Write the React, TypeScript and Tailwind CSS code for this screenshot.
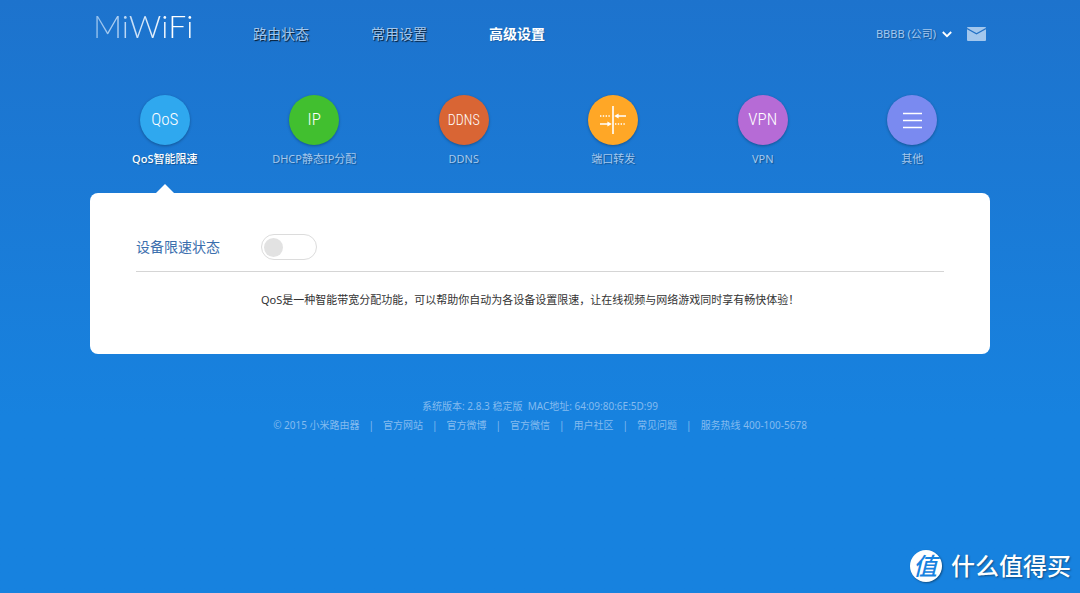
import { useState } from 'react';
import type { ReactNode } from 'react';
import clsx from 'clsx';

const navigation = [
  { name: '路由状态', current: false },
  { name: '常用设置', current: false },
  { name: '高级设置', current: true },
];

const footerLinks = ['官方网站', '官方微博', '官方微信', '用户社区', '常见问题'];

const PortForwardIcon = () => (
  <svg viewBox="0 0 28 30" className="h-[30px] w-7" fill="none" stroke="#fff" aria-hidden="true">
    <path d="M14 1v28" strokeWidth="1.6" />
    <path d="M1 11h11" strokeWidth="1.4" strokeDasharray="1.4 1.4" />
    <path d="M16 19h11" strokeWidth="1.4" strokeDasharray="1.4 1.4" />
    <path d="M19 11h8M1 19h9" strokeWidth="1.5" />
    <path d="M15.2 11l4.4-2.5v5zM12.8 19l-4.4-2.5v5z" fill="#fff" stroke="none" />
  </svg>
);

const ListIcon = () => (
  <svg viewBox="0 0 19 17" className="h-[17px] w-[19px]" fill="none" stroke="#fff" aria-hidden="true">
    <path d="M0 1.5h19M0 8.5h19M0 15.5h19" strokeWidth="1.5" />
  </svg>
);

const MailIcon = () => (
  <svg viewBox="0 0 19 14" className="h-[14px] w-[19px]" aria-hidden="true">
    <rect width="19" height="14" rx="1" fill="#a3c7ed" />
    <path d="M0 1.6l9.5 5.2L19 1.6" fill="none" stroke="#2472c6" strokeWidth="1.2" />
  </svg>
);

const ChevronIcon = () => (
  <svg viewBox="0 0 10 7" className="h-[7px] w-[10px]" fill="none" stroke="#fff" aria-hidden="true">
    <path d="M.8 1L5 5.2 9.2 1" strokeWidth="1.8" />
  </svg>
);

type Tab = { name: string; color: string; icon: ReactNode; size?: string };

const tabs: Tab[] = [
  { name: 'QoS智能限速', color: 'bg-[#2fa8ef]', icon: 'QoS', size: 'text-[17px]' },
  { name: 'DHCP静态IP分配', color: 'bg-[#41bf2f]', icon: 'IP', size: 'text-[17px]' },
  { name: 'DDNS', color: 'bg-[#d96534]', icon: 'DDNS', size: 'text-sm' },
  { name: '端口转发', color: 'bg-[#ffa726]', icon: <PortForwardIcon /> },
  { name: 'VPN', color: 'bg-[#b66bd6]', icon: 'VPN', size: 'text-[17px]' },
  { name: '其他', color: 'bg-[#7a8af0]', icon: <ListIcon /> },
];

const Header = () => (
  <header className="flex h-[68px] items-center">
    <a
      href="#"
      className="ml-[3px] w-40 self-start bg-linear-to-r from-[#8fbdec] to-white to-50% bg-clip-text pt-1 font-['Lato'] text-[32px] leading-[44px] font-light text-transparent"
    >
      MiWiFi
    </a>
    <nav className="flex gap-[62px]">
      {navigation.map((item) => (
        <a
          key={item.name}
          href="#"
          aria-current={item.current ? 'page' : undefined}
          className={clsx(
            'text-sm',
            item.current
              ? 'font-bold text-white [text-shadow:1px_1px_1px_rgba(0,0,0,0.2)]'
              : 'text-[#a4c8ee] [text-shadow:1px_1px_1px_rgba(0,0,0,0.8)]'
          )}
        >
          {item.name}
        </a>
      ))}
    </nav>
    <div className="mr-1 ml-auto flex items-center gap-[15px]">
      <button
        type="button"
        className="flex items-center gap-[6px] text-[11px] text-[#a4c8ee] [text-shadow:1px_1px_1px_rgba(0,0,0,0.3)]"
      >
        BBBB (公司)
        <ChevronIcon />
      </button>
      <button type="button" aria-label="消息">
        <MailIcon />
      </button>
    </div>
  </header>
);

export default function App() {
  const [current, setCurrent] = useState('QoS智能限速');
  const [limited, setLimited] = useState(false);

  return (
    <div className="relative min-h-screen bg-linear-to-b from-[#1d73cd] to-[#1782df] to-70% px-4 font-['Noto_Sans','Noto_Sans_CJK_SC',sans-serif]">
      <div className="mx-auto max-w-[900px]">
        <Header />

        <div className="mt-[27px] mr-[3px] grid grid-cols-6">
          {tabs.map((tab) => (
            <button
              key={tab.name}
              type="button"
              onClick={() => setCurrent(tab.name)}
              className="relative flex flex-col items-center pb-[26px]"
            >
              <span
                className={clsx(
                  "flex size-[50px] items-center justify-center rounded-full font-['Roboto_Condensed','Roboto',sans-serif] font-light text-white shadow-[0_1px_3px_rgba(0,0,0,0.3)]",
                  tab.color,
                  tab.size
                )}
              >
                {tab.icon}
              </span>
              <span
                className={clsx(
                  'mt-[6px] text-[11px] leading-4 whitespace-nowrap [text-shadow:1px_1px_1px_rgba(0,0,0,0.3)]',
                  tab.name === current ? 'font-medium text-white' : 'text-[#a4c8ee]'
                )}
              >
                {tab.name}
              </span>
              {tab.name === current && (
                <svg viewBox="0 0 18 9" className="absolute bottom-0 h-[9px] w-[18px]" aria-hidden="true">
                  <path d="M0 9l9-9 9 9z" fill="#fff" />
                </svg>
              )}
            </button>
          ))}
        </div>

        <main className="rounded-lg bg-white px-[46px] pt-[41px] pb-11">
          <div className="flex items-center border-b border-[#d5d5d5] pb-[11px]">
            <label htmlFor="qos" className="w-[125px] text-sm text-[#3b6fae]">
              设备限速状态
            </label>
            <input
              id="qos"
              type="checkbox"
              checked={limited}
              onChange={(e) => setLimited(e.target.checked)}
              className="flex h-[26px] w-14 appearance-none items-center rounded-full border border-[#dcdcdc] bg-white px-[2px] before:size-[19px] before:rounded-full before:bg-[#e2e2e2] checked:justify-end checked:before:bg-[#2fa8ef]"
            />
          </div>
          <p className="mt-[18px] ml-[125px] text-[11px] leading-5 text-[#333]">
            QoS是一种智能带宽分配功能，可以帮助你自动为各设备设置限速，让在线视频与网络游戏同时享有畅快体验！
          </p>
        </main>

        <footer className="mt-[43px] text-center text-[10px] leading-[19px] text-[#84bbef]">
          <p>系统版本: 2.8.3 稳定版&nbsp; MAC地址: 64:09:80:6E:5D:99</p>
          <div className="flex flex-wrap justify-center gap-x-[9px]">
            <span>© 2015 小米路由器</span>
            {footerLinks.map((name) => (
              <span key={name} className="flex gap-[9px]">
                <span>|</span>
                <a href="#">{name}</a>
              </span>
            ))}
            <span>|</span>
            <span>服务热线 400-100-5678</span>
          </div>
        </footer>
      </div>

      {/* Watermark */}
      <div className="absolute right-[9px] bottom-[11px] flex items-center gap-[9px] text-white">
        <span className="flex size-8 items-center justify-center rounded-full bg-white pr-[2px] text-2xl leading-8 font-medium text-[#1782df] italic shadow-[1px_1px_2px_rgba(0,0,0,0.4)]">
          值
        </span>
        <span className="text-2xl leading-8 font-medium [text-shadow:1px_1px_2px_rgba(0,0,0,0.4)]">
          什么值得买
        </span>
      </div>
    </div>
  );
}
